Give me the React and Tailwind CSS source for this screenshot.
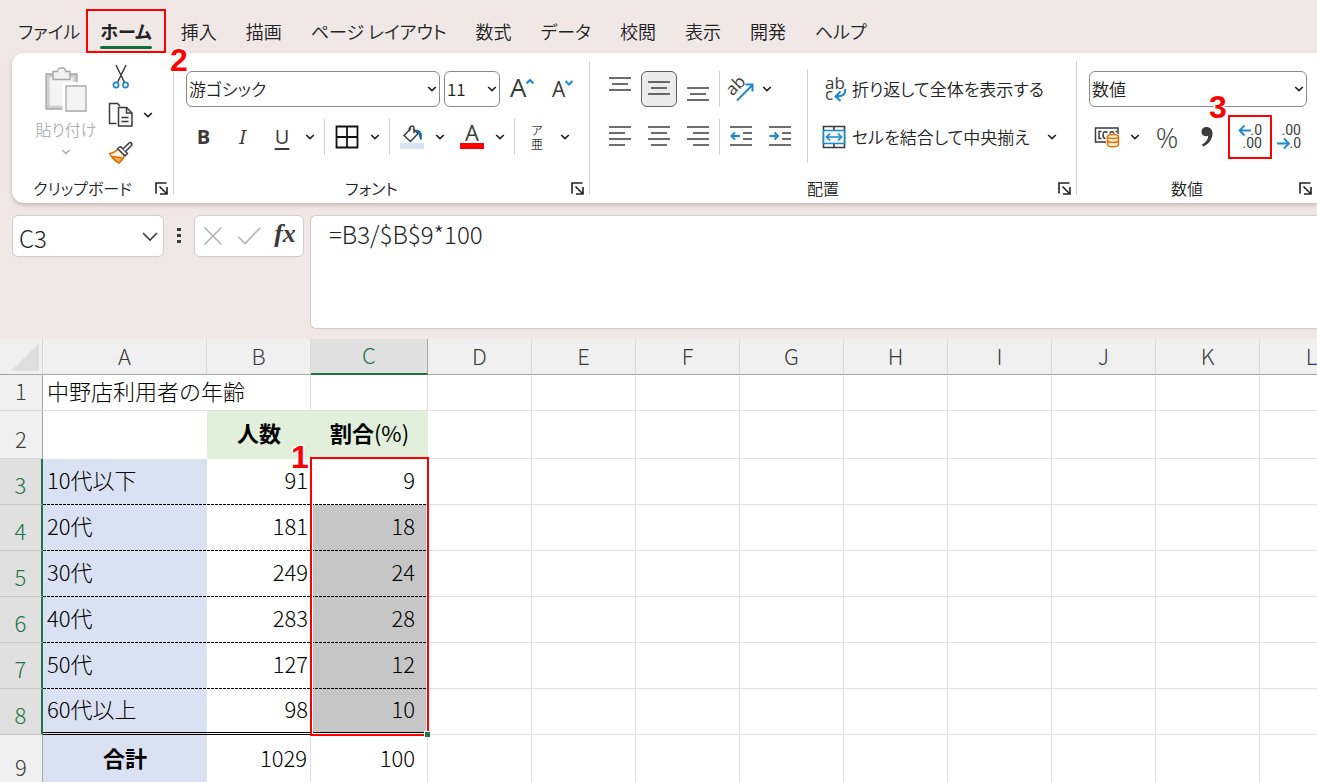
import { useState } from "react";
import clsx from "clsx";

const tabs = [
  "ホーム",
  "挿入",
  "描画",
  "ページ レイアウト",
  "数式",
  "データ",
  "校閲",
  "表示",
  "開発",
  "ヘルプ",
];

const columns = ["A", "B", "C", "D", "E", "F", "G", "H", "I", "J", "K", "L"];
const emptyColumns = columns.slice(3);

const ageRows = [
  { row: 3, label: "10代以下", count: 91, rate: 9 },
  { row: 4, label: "20代", count: 181, rate: 18 },
  { row: 5, label: "30代", count: 249, rate: 24 },
  { row: 6, label: "40代", count: 283, rate: 28 },
  { row: 7, label: "50代", count: 127, rate: 12 },
  { row: 8, label: "60代以上", count: 98, rate: 10 },
];

function Chevron({ className = "text-[#222222]" }) {
  return (
    <svg width="10" height="6" viewBox="0 0 10 6" className={className} aria-hidden="true">
      <path d="M1.2 1l3.8 3.6L8.8 1" fill="none" stroke="currentColor" strokeWidth="1.7" />
    </svg>
  );
}

function IconButton({ label, className = "w-9", children }) {
  return (
    <button
      type="button"
      aria-label={label}
      className={clsx("flex h-9 shrink-0 items-center justify-center rounded", className)}
    >
      {children}
    </button>
  );
}

function SplitButton({ label, children }) {
  return (
    <div className="flex">
      <IconButton label={label}>{children}</IconButton>
      <IconButton label={`${label}のオプション`} className="w-5">
        <Chevron />
      </IconButton>
    </div>
  );
}

function Divider() {
  return <div className="h-9 w-px shrink-0 bg-[#d0d0d0]" />;
}

function RibbonSelect({ label, value, className }) {
  return (
    <div className={clsx("relative shrink-0", className)}>
      <select
        aria-label={label}
        defaultValue={value}
        className="h-9 w-full appearance-none rounded-md border border-[#8a8a8a] bg-white pl-[2px] text-[17px] text-[#222222]"
      >
        <option>{value}</option>
      </select>
      <span className="pointer-events-none absolute inset-y-0 right-[3px] flex items-center">
        <Chevron />
      </span>
    </div>
  );
}

function RibbonGroup({ title, className, children }) {
  return (
    <section className={clsx("flex shrink-0 flex-col pt-[18px]", className)}>
      <div className="h-21 px-3">{children}</div>
      <div className="mt-5 flex h-[26px] items-center pr-[4px]">
        <h2 className="flex-1 text-center text-base leading-6">{title}</h2>
        <button type="button" aria-label={`${title}の設定`} className="flex size-4 items-center justify-center">
          <svg width="13" height="13" viewBox="0 0 13 13" fill="none" stroke="#222222" strokeWidth="1.6" aria-hidden="true">
            <path d="M1 11.5V1h10.5M4.5 4.5l6.5 6.5M12 5v7H5" />
          </svg>
        </button>
      </div>
    </section>
  );
}

function GroupDivider() {
  return <div className="my-2 w-px shrink-0 bg-[#d0d0d0]" />;
}

function StepNumber({ className, children }) {
  return (
    <span
      className={clsx(
        "pointer-events-none absolute z-20 font-['Liberation_Sans',sans-serif] text-[32px] leading-8 font-bold text-[#ff0000] [-webkit-text-stroke:3px_white] [paint-order:stroke_fill]",
        className
      )}
    >
      {children}
    </span>
  );
}

// Text lines, each given as [x1, x2, y]
function LinesIcon({ lines, children }) {
  return (
    <svg width="24" height="24" viewBox="0 0 24 24" fill="none" aria-hidden="true">
      {lines.map(([x1, x2, y]) => (
        <path key={y} d={`M${x1} ${y}H${x2}`} stroke="#3b3b3b" strokeWidth="1.7" />
      ))}
      {children}
    </svg>
  );
}

function PasteIcon() {
  return (
    <svg width="44" height="46" viewBox="0 0 44 46" fill="none" stroke="#a6a6a6" strokeWidth="1.3" aria-hidden="true">
      <path d="M2 7h31v35H2z" fill="#cfcfcf" />
      <path d="M5.5 10.500h24v28h-24z" fill="#f4f4f4" stroke="none" />
      <path d="M9 12.500V4.500h4.500c0-5 8-5 8 0H26v8z" fill="#f0f0f0" />
      <path d="M19 16h25v29H19z" fill="#ffffff" stroke="#ffffff" />
      <path d="M22 19h20v25H22z" fill="#f4f4f4" />
    </svg>
  );
}

function CutIcon() {
  return (
    <svg width="18" height="26" viewBox="0 0 18 26" fill="none" aria-hidden="true">
      <path d="M4 1l8.500 17.500M14 1L5.500 18.500" stroke="#3b3b3b" strokeWidth="1.5" />
      <circle cx="4" cy="21" r="2.600" stroke="#1e88d2" strokeWidth="1.700" />
      <circle cx="13.500" cy="21" r="2.600" stroke="#1e88d2" strokeWidth="1.700" />
    </svg>
  );
}

function CopyIcon() {
  return (
    <svg width="26" height="26" viewBox="0 0 26 26" fill="none" stroke="#3b3b3b" strokeWidth="1.500" aria-hidden="true">
      <path d="M8.500 21.500H1.500V1.500h8l2.500 2.500" />
      <path d="M10.500 5.500h8l5.500 5.500v13H10.500z" fill="#f7f7f7" />
      <path d="M18.500 5.500v5.500H24M13.500 15.500h7M13.500 19.500h7" />
    </svg>
  );
}

function PainterIcon() {
  return (
    <svg width="26" height="24" viewBox="0 0 26 24" fill="none" strokeWidth="1.500" strokeLinejoin="round" aria-hidden="true">
      <path d="M10.500 7.500C8 10.500 5 12 1.500 12.500c2 3.500 5.500 7.500 9.500 9.500 2.500-2 4.500-4.500 5.500-8z" fill="#fff3e2" stroke="#e07000" />
      <path d="M4 15.500c4 .5 7.500.5 11 2L11 22c-3-1.500-5.500-4-7-6.500z" fill="#f7b35b" stroke="#e07000" />
      <path d="M12.500 5.500l7 7-2.500 2.500-7.500-7.500z" fill="#ffffff" stroke="#3b3b3b" />
      <path d="M15 8l6-6c1.500-1.500 4 1 2.500 2.500l-6 6" fill="#ffffff" stroke="#3b3b3b" />
    </svg>
  );
}

function FontSizeIcon({ grow }) {
  return (
    <svg width="25" height="24" viewBox="0 0 25 24" fill="none" className="overflow-visible" aria-hidden="true">
      <text
        x={grow ? 0 : 2}
        y="20"
        fill="#3b3b3b"
        className={clsx("font-['Open_Sans',sans-serif] font-normal", grow ? "text-[26px]" : "text-[21px]")}
      >
        A
      </text>
      <path d={grow ? "M16.500 6.500l3.500-3.500L23.500 6.500" : "M15.500 4l3.500 3.500L22.500 4"} stroke="#1e88d2" strokeWidth="2" />
    </svg>
  );
}

function BordersIcon() {
  return (
    <svg width="24" height="24" viewBox="0 0 24 24" fill="#fafafa" stroke="#111111" strokeWidth="1.800" aria-hidden="true">
      <path d="M1.500 1.500h21v21h-21zM12 1.500v21M1.500 12h21" />
    </svg>
  );
}

function FillIcon() {
  return (
    <svg width="26" height="26" viewBox="0 0 26 26" fill="none" aria-hidden="true">
      <path d="M1 19h24v6H1z" fill="#d9e1f2" />
      <path d="M12 4.500L5 11.500l6.500 6 7.500-8-5-5M10 7.500c0-6 5-7 5-3v4.500" stroke="#3b3b3b" strokeWidth="1.500" />
      <path d="M16.500 5.500c5 .5 7.500 3 6 10.500-1 0-2-.5-2.500-5z" fill="#1668b0" />
    </svg>
  );
}

function FontColorIcon() {
  return (
    <svg width="26" height="26" viewBox="0 0 26 26" className="overflow-visible" aria-hidden="true">
      <path d="M1 19h24v6H1z" fill="#ff0000" />
      <text x="13" y="17" textAnchor="middle" fill="#3b3b3b" className="font-['Open_Sans',sans-serif] text-[22px] font-normal">
        A
      </text>
    </svg>
  );
}

function RubyIcon() {
  return (
    <svg width="16" height="28" viewBox="0 0 16 28" fill="#3b3b3b" className="overflow-visible" aria-hidden="true">
      <text x="8" y="12" textAnchor="middle" className="font-['Noto_Sans_CJK_JP',sans-serif] text-xs">
        ア
      </text>
      <text x="8" y="26" textAnchor="middle" className="font-['Noto_Sans_CJK_JP',sans-serif] text-xs">
        亜
      </text>
    </svg>
  );
}

function OrientationIcon() {
  return (
    <svg width="28" height="28" viewBox="0 0 28 28" fill="none" className="overflow-visible" aria-hidden="true">
      <text
        x="-1"
        y="16"
        transform="rotate(-45 9 11)"
        fill="#3b3b3b"
        className="font-['Open_Sans',sans-serif] text-[17px] font-normal"
      >
        ab
      </text>
      <path d="M10 25.500L25 10.500M18.500 9.500H25.500V16.500" stroke="#1e88d2" strokeWidth="2" />
    </svg>
  );
}

function WrapIcon() {
  return (
    <svg width="24" height="26" viewBox="0 0 24 26" fill="none" className="overflow-visible" aria-hidden="true">
      <g fill="#3b3b3b" className="font-['Open_Sans',sans-serif] text-[17px] font-normal">
        <text x="3" y="13">
          ab
        </text>
        <text x="3" y="24">
          c
        </text>
      </g>
      <path d="M23 13c1 5-2 7.500-9.500 7.500M18.500 15.500l-5 5 5 4.500" stroke="#1e88d2" strokeWidth="2" />
    </svg>
  );
}

function MergeIcon() {
  return (
    <svg width="24" height="24" viewBox="0 0 24 24" fill="none" aria-hidden="true">
      <path d="M1.500 1.500h21v21h-21zM12 1.500v4M12 18.500v4" stroke="#3b3b3b" strokeWidth="1.600" />
      <path d="M1.500 5.500h21v13h-21z" fill="#f2f9fe" stroke="#1e88d2" strokeWidth="1.600" />
      <path d="M5 12h14M8 8.500L4.500 12 8 15.500M16 8.500l3.500 3.500-3.500 3.500" stroke="#1e88d2" strokeWidth="1.700" />
    </svg>
  );
}

function CurrencyIcon() {
  return (
    <svg width="26" height="22" viewBox="0 0 26 22" fill="none" strokeWidth="1.500" aria-hidden="true">
      <path d="M24 8V2H1.500v14H12" stroke="#3b3b3b" />
      <path d="M7.500 5.500H5v7h2.500M13.500 6.500c-3.500-2-4.500 0-4.500 2.500s1 3.500 2.500 3.500M16 7.500c0-2.500 3.500-2.500 4 0M23 5.500h-1.500" stroke="#3b3b3b" />
      <path d="M13.500 10.500v8c0 3 11 3 11 0v-8" fill="#fff0d9" stroke="#e07000" />
      <ellipse cx="19" cy="10.500" rx="5.500" ry="2" fill="#fff0d9" stroke="#e07000" />
      <path d="M13.500 14.500c0 2.500 11 2.500 11 0" stroke="#e07000" />
    </svg>
  );
}

function ArrowIcon({ left }) {
  return (
    <svg width="14" height="13" viewBox="0 0 14 13" fill="none" stroke="#1e88d2" strokeWidth="1.800" aria-hidden="true">
      <path d={left ? "M13 6.500H1.500M6.500 1.500l-5 5 5 5" : "M0 6.500h12M7 1.500l5 5-5 5"} />
    </svg>
  );
}

function DecimalIcon({ increase }) {
  return (
    <span className="grid grid-cols-[12px_12px] font-[Roboto,sans-serif] text-sm leading-[13px] font-normal text-[#3b3b3b]">
      {increase ? (
        <>
          <ArrowIcon left />
          <span className="text-right">.0</span>
          <span className="col-span-2 text-right">.00</span>
        </>
      ) : (
        <>
          <span className="col-span-2 text-right">.00</span>
          <ArrowIcon />
          <span className="text-right">.0</span>
        </>
      )}
    </span>
  );
}

function Ribbon() {
  return (
    <div className="ml-3 flex h-[150px] overflow-hidden rounded-l-xl bg-white font-[350] shadow-[0_2px_4px_rgba(120,90,90,0.35)]">
      <RibbonGroup title="クリップボード" className="w-[161px]">
        <div className="-mt-3 flex gap-1.5 pl-2.5">
          <button type="button" className="flex w-16 shrink-0 flex-col items-center pt-2 text-[#b3b3b3]">
            <PasteIcon />
            <span className="mt-1 text-base leading-6 whitespace-nowrap">貼り付け</span>
            <Chevron className="mt-2 text-[#b3b3b3]" />
          </button>
          <div className="flex flex-col gap-[2px]">
            <IconButton label="切り取り" className="w-[34px]">
              <CutIcon />
            </IconButton>
            <div className="flex">
              <IconButton label="コピー" className="w-[34px]">
                <CopyIcon />
              </IconButton>
              <IconButton label="コピーのオプション" className="w-5">
                <Chevron />
              </IconButton>
            </div>
            <IconButton label="書式のコピー" className="w-[34px]">
              <PainterIcon />
            </IconButton>
          </div>
        </div>
      </RibbonGroup>
      <GroupDivider />

      <RibbonGroup title="フォント" className="w-[415px]">
        <div className="flex gap-1">
          <RibbonSelect label="フォント名" value="游ゴシック" className="w-[254px]" />
          <RibbonSelect label="フォント サイズ" value="11" className="w-14" />
          <IconButton label="フォント サイズの拡大">
            <FontSizeIcon grow />
          </IconButton>
          <IconButton label="フォント サイズの縮小">
            <FontSizeIcon />
          </IconButton>
        </div>
        <div className="mt-3 flex gap-1 font-['Open_Sans',sans-serif] text-xl text-[#3b3b3b]">
          <IconButton label="太字" className="w-[35px]">
            <b>B</b>
          </IconButton>
          <IconButton label="斜体" className="w-[35px]">
            <i className="font-['Noto_Sans','Open_Sans',sans-serif] font-normal">I</i>
          </IconButton>
          <SplitButton label="下線">
            <span className="font-normal underline underline-offset-4">U</span>
          </SplitButton>
          <Divider />
          <SplitButton label="罫線">
            <BordersIcon />
          </SplitButton>
          <Divider />
          <SplitButton label="塗りつぶしの色">
            <FillIcon />
          </SplitButton>
          <SplitButton label="フォントの色">
            <FontColorIcon />
          </SplitButton>
          <Divider />
          <SplitButton label="ふりがなの表示">
            <RubyIcon />
          </SplitButton>
        </div>
      </RibbonGroup>
      <GroupDivider />

      <RibbonGroup title="配置" className="w-[486px]">
        <div className="flex">
          <div className="flex shrink-0 flex-col gap-3">
            <div className="flex gap-[3px]">
              <IconButton label="上揃え">
                <LinesIcon lines={[[1, 23, 1], [4, 20, 7], [1, 23, 13]]} />
              </IconButton>
              <IconButton label="上下中央揃え" className="w-9 rounded-md border border-[#5f5f5f] bg-[#ebebeb]">
                <LinesIcon lines={[[1, 23, 5], [4, 20, 11], [1, 23, 17]]} />
              </IconButton>
              <IconButton label="下揃え">
                <LinesIcon lines={[[1, 23, 11], [4, 20, 17], [1, 23, 23]]} />
              </IconButton>
              <Divider />
              <IconButton label="方向">
                <OrientationIcon />
              </IconButton>
              <IconButton label="方向のオプション" className="w-2.5">
                <Chevron />
              </IconButton>
            </div>
            <div className="flex gap-[3px]">
              <IconButton label="左揃え">
                <LinesIcon lines={[[1, 23, 2], [1, 17, 8], [1, 23, 14], [1, 17, 20]]} />
              </IconButton>
              <IconButton label="中央揃え">
                <LinesIcon lines={[[1, 23, 2], [4, 20, 8], [1, 23, 14], [4, 20, 20]]} />
              </IconButton>
              <IconButton label="右揃え">
                <LinesIcon lines={[[1, 23, 2], [7, 23, 8], [1, 23, 14], [7, 23, 20]]} />
              </IconButton>
              <Divider />
              <IconButton label="インデントを減らす">
                <LinesIcon lines={[[1, 23, 2], [14, 23, 8], [14, 23, 14], [1, 23, 20]]}>
                  <path d="M11 11H2.500M6 7.500L2.500 11 6 14.500" stroke="#1e88d2" strokeWidth="2" />
                </LinesIcon>
              </IconButton>
              <IconButton label="インデントを増やす">
                <LinesIcon lines={[[1, 23, 2], [14, 23, 8], [14, 23, 14], [1, 23, 20]]}>
                  <path d="M1.500 11H10M6.500 7.500L10 11l-3.500 3.500" stroke="#1e88d2" strokeWidth="2" />
                </LinesIcon>
              </IconButton>
            </div>
          </div>
          <div className="-mt-[2px] -mb-2 ml-[9px] w-px bg-[#d0d0d0]" />
          <div className="ml-3.5 flex flex-1 flex-col gap-3 text-[17px]">
            <button type="button" className="flex h-9 items-center gap-1.5 whitespace-nowrap">
              <WrapIcon />
              折り返して全体を表示する
            </button>
            <div className="flex justify-between">
              <button type="button" className="flex h-9 items-center gap-1.5 whitespace-nowrap">
                <MergeIcon />
                セルを結合して中央揃え
              </button>
              <IconButton label="セルを結合のオプション" className="w-6">
                <Chevron />
              </IconButton>
            </div>
          </div>
        </div>
      </RibbonGroup>
      <GroupDivider />

      <RibbonGroup title="数値" className="w-[240px]">
        <RibbonSelect label="表示形式" value="数値" className="w-[218px]" />
        <div className="relative mt-3 flex gap-1">
          <SplitButton label="通貨表示形式">
            <CurrencyIcon />
          </SplitButton>
          <IconButton label="パーセント スタイル">
            <span className="font-['Open_Sans',sans-serif] text-[28px] leading-9 text-[#3b3b3b]">%</span>
          </IconButton>
          <IconButton label="桁区切りスタイル">
            <svg width="12" height="20" viewBox="0 0 12 20" fill="#3b3b3b" aria-hidden="true">
              <path d="M5.500 0C2.500 0 .5 2 .5 4.800s2 4.500 4.700 4.500c.8 0 1.500-.2 2-.5C7 12.500 5 15.500 1 17.500l1 2C8 17 11.500 12 11.500 6.500 11.500 2.500 9 0 5.500 0z" />
            </svg>
          </IconButton>
          <div className="flex">
            <span className="relative">
              <IconButton label="小数点以下の表示桁数を増やす" className="w-[42px]">
                <DecimalIcon increase />
              </IconButton>
              <span className="pointer-events-none absolute -inset-x-px -inset-y-1 border-2 border-[#ff0000]" />
              <StepNumber className="-top-7 -left-5">3</StepNumber>
            </span>
            <IconButton label="小数点以下の表示桁数を減らす">
              <DecimalIcon />
            </IconButton>
          </div>
        </div>
      </RibbonGroup>
    </div>
  );
}

function FormulaBar() {
  return (
    <div className="flex items-start pt-3 pb-[10px] pl-3">
      <div className="relative w-[152px] shrink-0">
        <input
          aria-label="名前ボックス"
          defaultValue="C3"
          className="h-[42px] w-full rounded-md border border-[#d4cccc] bg-white pt-0.5 pl-[6px] text-2xl font-light text-[#222222]"
        />
        <svg width="16" height="10" viewBox="0 0 16 10" className="absolute top-[17px] right-1.5" aria-hidden="true">
          <path d="M1 1l7 7 7-7" fill="none" stroke="#3b3b3b" strokeWidth="1.600" />
        </svg>
      </div>
      <svg width="30" height="42" viewBox="0 0 30 42" fill="#3b3b3b" className="shrink-0" aria-hidden="true">
        <path d="M13 13h4v3h-4zM13 19h4v3h-4zM13 25h4v3h-4z" />
      </svg>
      <div className="flex h-[42px] w-[110px] shrink-0 items-center rounded-md border border-[#d4cccc] bg-white">
        <IconButton label="キャンセル">
          <svg width="20" height="20" viewBox="0 0 20 20" fill="none" stroke="#b3b3b3" strokeWidth="1.600" aria-hidden="true">
            <path d="M1.500 1.500l17 17M18.500 1.500l-17 17" />
          </svg>
        </IconButton>
        <IconButton label="入力">
          <svg width="24" height="18" viewBox="0 0 24 18" fill="none" stroke="#b3b3b3" strokeWidth="1.600" aria-hidden="true">
            <path d="M1 9.500l7 7L23 1" />
          </svg>
        </IconButton>
        <IconButton label="関数の挿入">
          <span className="pb-1 font-['Liberation_Serif',serif] text-[26px] leading-8 font-bold text-[#3b3b3b] italic">fx</span>
        </IconButton>
      </div>
      <textarea
        aria-label="数式バー"
        defaultValue="=B3/$B$9*100"
        className="ml-[6px] block h-[114px] flex-1 resize-none rounded-l-md border border-r-0 border-[#d4cccc] bg-white pt-0.5 pl-[18px] text-2xl leading-8 font-light text-[#222222]"
      />
    </div>
  );
}

function RowHeader({ row, selected }) {
  return (
    <th
      scope="row"
      className={clsx(
        "border-b p-0 pb-2 text-center align-bottom font-light",
        selected
          ? "border-r-2 border-r-[#217346] border-b-[#c6c6c6] bg-[#e0e0e0] text-[#217346]"
          : "border-r border-r-[#a6a6a6] border-b-[#d4d4d4] bg-[#f0f0f0] text-[#3b3b3b]"
      )}
    >
      {row}
    </th>
  );
}

function EmptyCells() {
  return emptyColumns.map((name) => <td key={name} className="border-r border-b border-[#e0e0e0]" />);
}

function Sheet() {
  return (
    <div className="flex-1 overflow-hidden bg-white">
      <table className="w-max table-fixed border-separate border-spacing-0 text-[22px] leading-6 font-light text-black">
        <colgroup>
          <col className="w-[43px]" />
          <col className="w-[164px]" />
          <col className="w-[104px]" />
          <col className="w-[117px]" />
          {emptyColumns.map((name) => (
            <col key={name} className="w-[104px]" />
          ))}
        </colgroup>
        <thead>
          <tr className="h-9 bg-[#f0f0f0]">
            <td className="border-r border-b border-r-[#d4d4d4] border-b-[#a6a6a6] p-0">
              <svg width="28" height="28" viewBox="0 0 28 28" className="ml-auto mr-[3px]" aria-hidden="true">
                <path d="M28 0v28H0z" fill="#dedede" />
              </svg>
            </td>
            {columns.map((name) => (
              <th
                key={name}
                scope="col"
                className={clsx(
                  "p-0 pb-1 font-light",
                  name === "C"
                    ? "border-r border-b-2 border-r-[#a6a6a6] border-b-[#217346] bg-[#e0e0e0] text-[#217346]"
                    : "border-r border-b border-r-[#d8d8d8] border-b-[#a6a6a6] text-[#3b3b3b]"
                )}
              >
                {name}
              </th>
            ))}
          </tr>
        </thead>
        <tbody>
          <tr className="h-9">
            <RowHeader row={1} />
            <td colSpan={2} className="border-r border-b border-[#e0e0e0] p-0 pb-1.5 pl-1">
              中野店利用者の年齢
            </td>
            <td className="border-r border-b border-[#e0e0e0]" />
            <EmptyCells />
          </tr>
          <tr className="h-12">
            <RowHeader row={2} />
            <td className="p-0" />
            <th scope="col" className="bg-[#e2efda] p-0 pb-1.5 font-bold">
              人数
            </th>
            <th scope="col" className="bg-[#e2efda] p-0 pb-1.5 font-bold">
              割合<span className="font-normal">(%)</span>
            </th>
            <EmptyCells />
          </tr>
          {ageRows.map(({ row, label, count, rate }) => {
            const line =
              row === 8
                ? "border-b-3 border-double border-black"
                : "bg-[repeating-linear-gradient(90deg,#000_0_3px,transparent_3px_4px)] bg-[length:100%_1px] bg-bottom bg-no-repeat";
            return (
              <tr key={row} className="h-[46px]">
                <RowHeader row={row} selected />
                <td className={clsx("bg-[#d9e1f2] p-0 pb-1.5 pl-1", line)}>{label}</td>
                <td className={clsx("p-0 pr-[3px] pb-1.5 text-right", line)}>{count}</td>
                <td className={clsx("relative p-0 pr-[13px] pb-1.5 text-right", line, row !== 3 && "bg-[#c6c6c6]")}>
                  {rate}
                  {row === 3 && (
                    <>
                      <span className="pointer-events-none absolute -top-[2px] -left-px z-10 h-[279px] w-[119px] border-2 border-[#ff0000] shadow-[inset_0_0_0_1px_white]">
                        <span className="absolute -right-[3px] -bottom-[3px] size-[6px] border-t border-l border-white bg-[#217346]" />
                      </span>
                      <StepNumber className="-top-4.5 -left-5">1</StepNumber>
                    </>
                  )}
                </td>
                <EmptyCells />
              </tr>
            );
          })}
          <tr className="h-13">
            <RowHeader row={9} />
            <th scope="row" className="bg-[#d9e1f2] p-0 pb-2 font-bold">
              合計
            </th>
            <td className="border-r border-[#e0e0e0] p-0 pr-[3px] pb-2 text-right">1029</td>
            <td className="border-r border-[#e0e0e0] p-0 pr-3 pb-2 text-right">100</td>
            <EmptyCells />
          </tr>
        </tbody>
      </table>
    </div>
  );
}

export default function App() {
  const [activeTab, setActiveTab] = useState("ホーム");

  return (
    <main className="flex h-screen flex-col overflow-hidden bg-[#f0e7e7] font-['Noto_Sans_CJK_JP',sans-serif] text-[#222222]">
      <header className="flex h-[53px] shrink-0 gap-5 pt-[9px] pl-[18px] text-lg leading-6 font-[350] whitespace-nowrap [font-feature-settings:'palt']">
        <button type="button" className="h-11">
          ファイル
        </button>
        <nav className="flex gap-[29px]">
          {tabs.map((tab) => (
            <button
              key={tab}
              type="button"
              onClick={() => setActiveTab(tab)}
              className={clsx("relative h-11", tab === activeTab && "font-bold")}
            >
              {tab}
              {tab === activeTab && <span className="absolute inset-x-0 bottom-1 h-[3px] rounded-full bg-[#0f703b]" />}
              {tab === "ホーム" && (
                <>
                  <span className="pointer-events-none absolute -inset-x-3.5 inset-y-0 border-2 border-[#ff0000]" />
                  <StepNumber className="top-[35px] -right-9">2</StepNumber>
                </>
              )}
            </button>
          ))}
        </nav>
      </header>
      <div className="shrink-0 [font-feature-settings:'palt']">
        <Ribbon />
      </div>
      <FormulaBar />
      <Sheet />
    </main>
  );
}
